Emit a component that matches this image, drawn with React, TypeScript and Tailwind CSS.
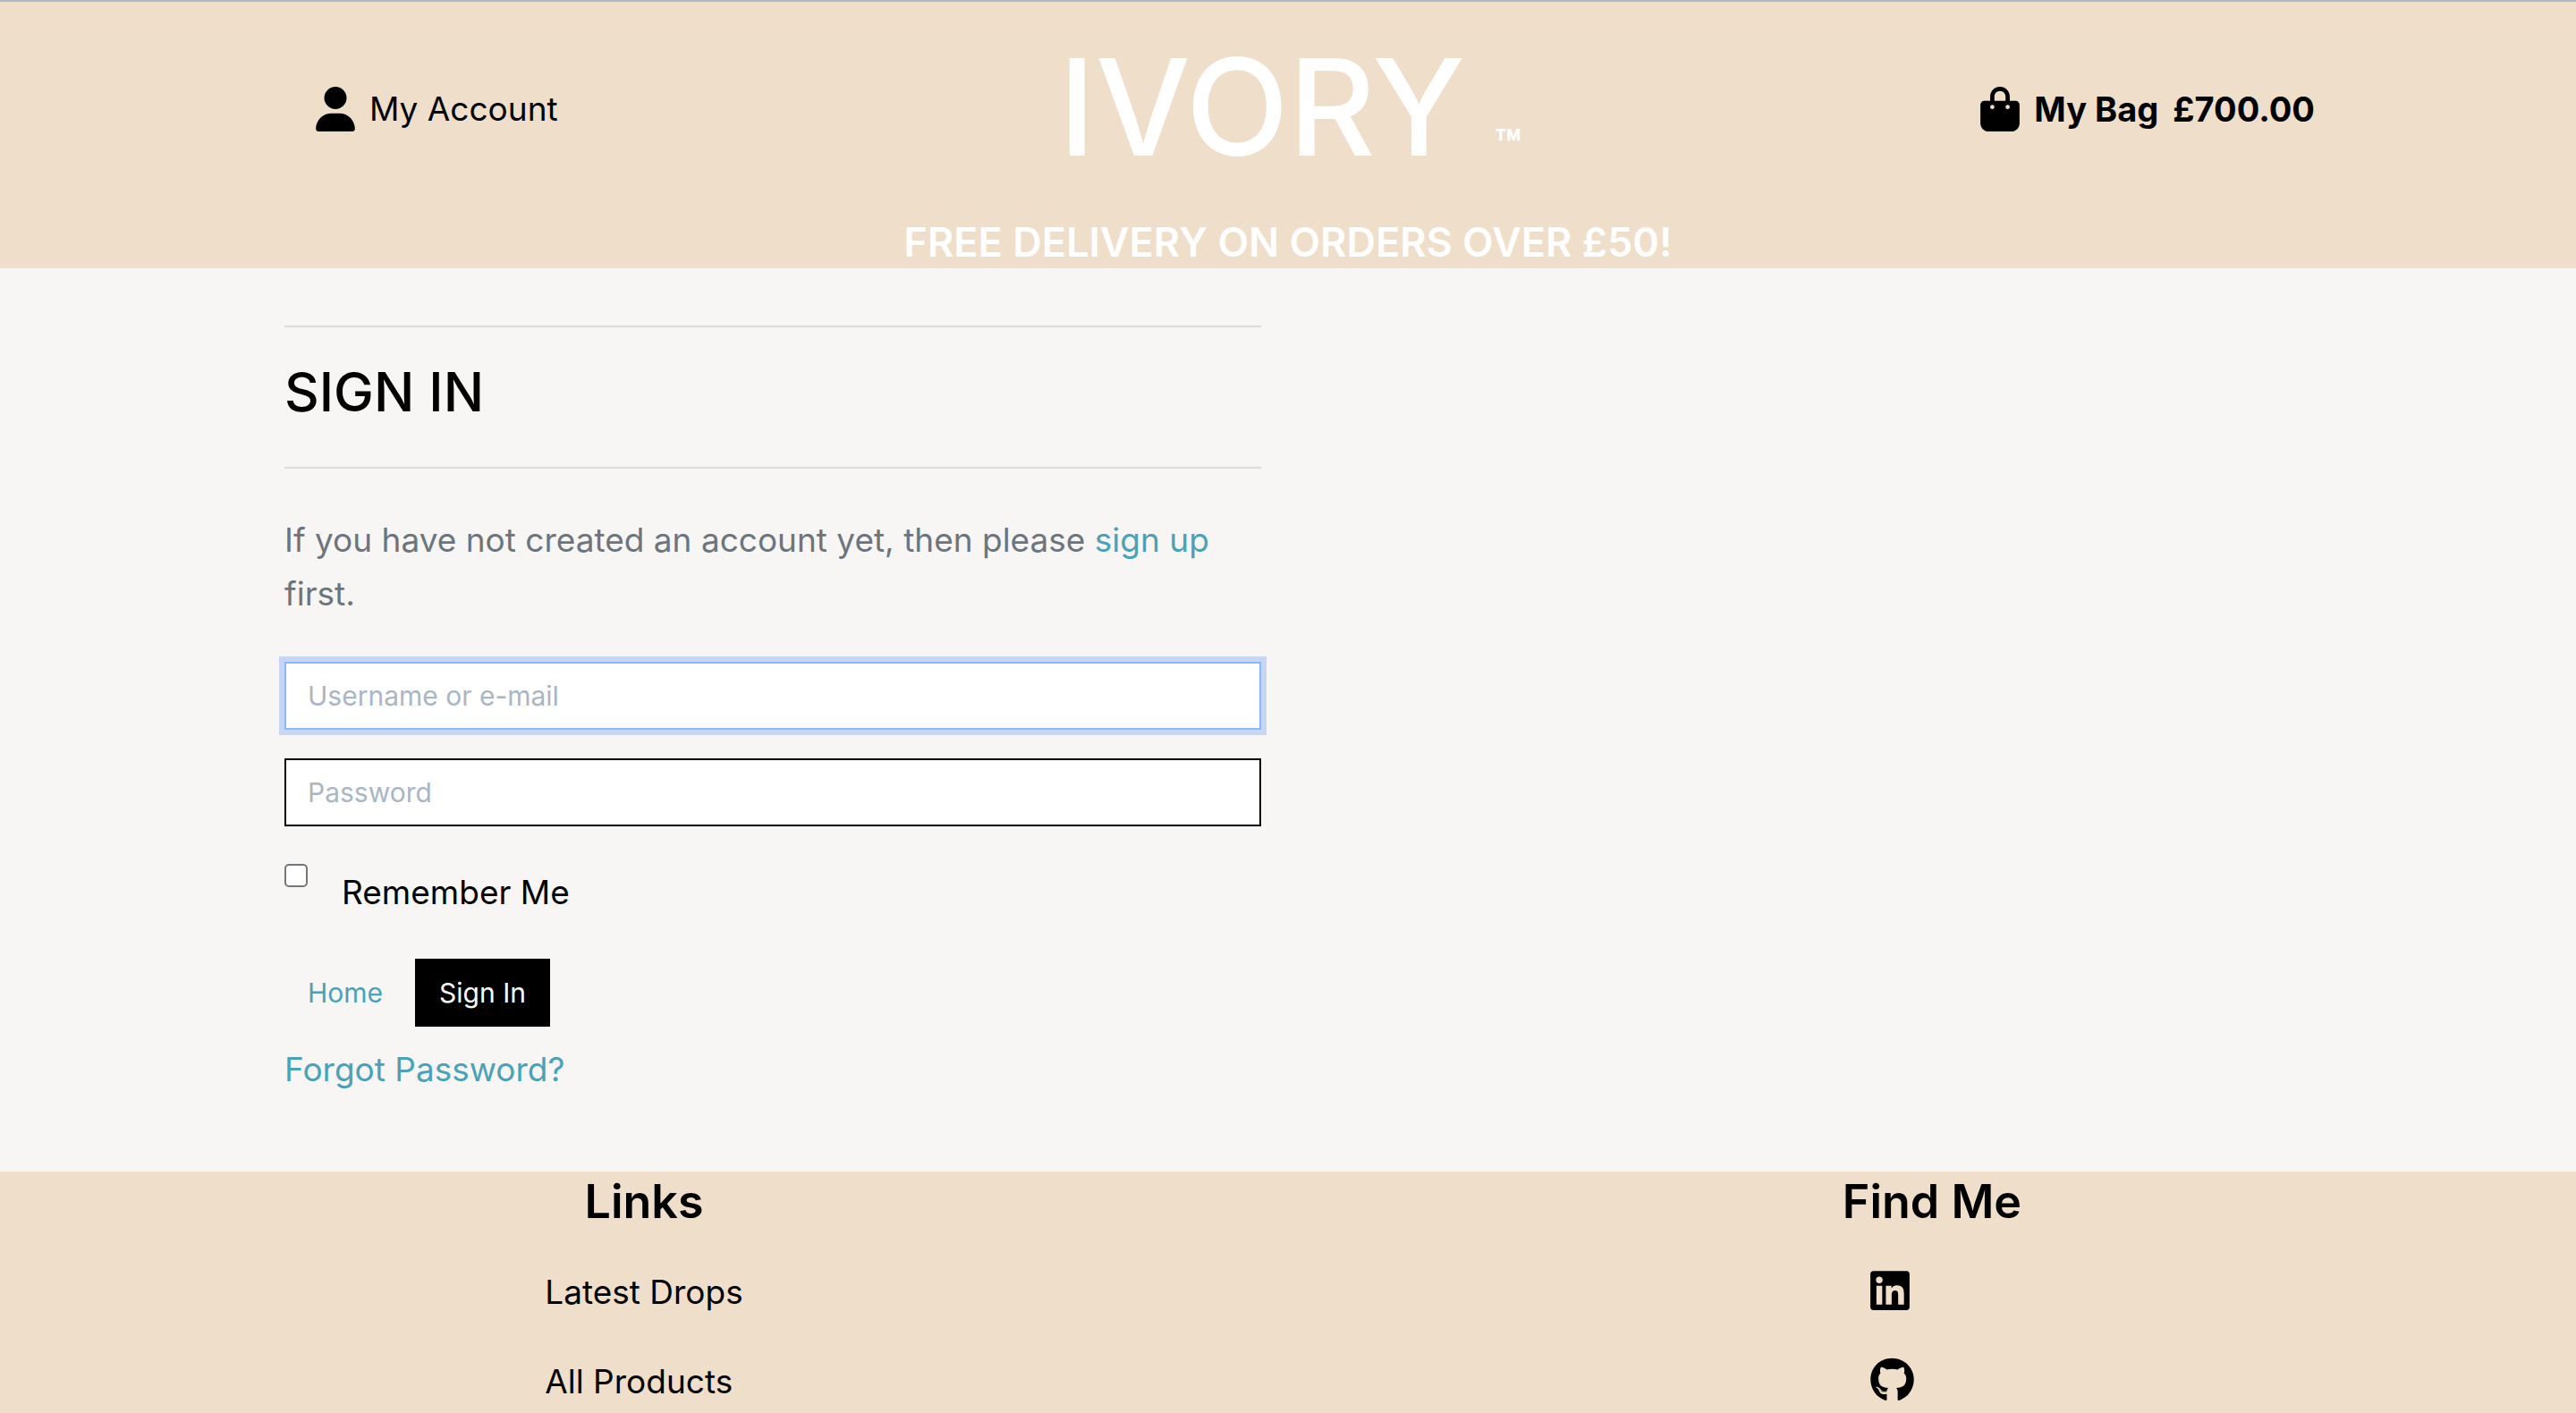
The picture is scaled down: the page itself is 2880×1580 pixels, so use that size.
import { FaBagShopping, FaGithub, FaLinkedin, FaUser } from "react-icons/fa6";

function Header() {
  return (
    <header className="border-t-2 border-[#a9b9c6] bg-[#efdeca]">
      <div className="grid h-60 grid-cols-[1fr_auto_1fr] items-center pl-[353px] pr-[292px]">
        <a href="#account" className="flex items-center gap-4 justify-self-start text-[37px] leading-[62px]">
          <FaUser className="h-[50px] w-[44px]" />
          My Account
        </a>
        <a href="#home" className="flex items-end gap-8 pb-1 pr-14 font-medium text-white">
          <span className="text-[150px] leading-[180px]">IVORY</span>
          <span className="text-[48px] font-bold leading-[96px]">™</span>
        </a>
        <a href="#bag" className="flex items-center gap-4 justify-self-end text-[38px] font-bold leading-[62px]">
          <FaBagShopping className="h-[50px] w-[44px]" />
          <span>My Bag</span>
          <span>£700.00</span>
        </a>
      </div>
      <p className="text-center text-[45px] font-semibold leading-[58px] text-white">
        FREE DELIVERY ON ORDERS OVER £50!
      </p>
    </header>
  );
}

function SignInForm() {
  return (
    <form onSubmit={(e) => e.preventDefault()}>
      <div className="flex flex-col gap-8">
        <input
          type="text"
          aria-label="Username or e-mail"
          placeholder="Username or e-mail"
          className="h-[76px] w-full border-2 border-[#8bb8f8] bg-white px-6 text-[30px] outline-none ring-6 ring-[#c7d5f6] placeholder:text-[#aab6c4]"
        />
        <input
          type="password"
          aria-label="Password"
          placeholder="Password"
          className="h-[76px] w-full border-2 border-black bg-white px-6 text-[30px] outline-none placeholder:text-[#aab6c4]"
        />
      </div>
      <div className="mt-[42px] flex items-start gap-[38px]">
        <input
          id="remember"
          type="checkbox"
          className="size-[26px] appearance-none rounded-[5px] border-2 border-[#767676] bg-white checked:bg-black"
        />
        <label htmlFor="remember" className="text-[37px] leading-[64px]">
          Remember Me
        </label>
      </div>
      <div className="mt-[42px] flex gap-[10px] text-[30px] leading-[76px]">
        <a href="#home" className="px-[26px] text-[#4aa2b8]">
          Home
        </a>
        <button type="submit" className="bg-black px-[27px] text-white">
          Sign In
        </button>
      </div>
      <a href="#reset" className="mt-[18px] inline-block text-[37px] leading-[60px] text-[#4aa2b8]">
        Forgot Password?
      </a>
    </form>
  );
}

function Footer() {
  return (
    <footer className="grid flex-1 grid-cols-2 bg-[#efdeca]">
      <section className="flex flex-col items-center">
        <h2 className="text-[52px] font-semibold leading-[68px]">Links</h2>
        <ul className="mt-[37px] flex flex-col gap-10 text-[37px] leading-[60px]">
          <li>
            <a href="#latest">Latest Drops</a>
          </li>
          <li>
            <a href="#products">All Products</a>
          </li>
        </ul>
      </section>
      <section className="flex flex-col items-center">
        <h2 className="text-[52px] font-semibold leading-[68px]">Find Me</h2>
        <ul className="mt-10 flex w-[138px] flex-col gap-[50px]">
          <li>
            <a href="#linkedin" aria-label="LinkedIn" className="block">
              <FaLinkedin className="h-[50px] w-[44px]" />
            </a>
          </li>
          <li>
            <a href="#github" aria-label="GitHub" className="block">
              <FaGithub className="h-[50px] w-[49px]" />
            </a>
          </li>
        </ul>
      </section>
    </footer>
  );
}

export default function App() {
  return (
    <div className="flex min-h-screen flex-col bg-[#f7f6f4] font-[Inter,sans-serif] text-black">
      <Header />
      <main className="mx-auto grid w-full max-w-[2280px] grid-cols-2 pb-[84px] pt-16">
        <div className="pl-[18px] pr-[30px]">
          <h1 className="border-y-2 border-[#dddcda] pb-12 pt-9 text-[60px] font-medium leading-[72px]">SIGN IN</h1>
          <p className="mb-[46px] mt-[50px] text-[37px] leading-[60px] text-[#6c757d]">
            If you have not created an account yet, then please{" "}
            <a href="#signup" className="text-[#4aa2b8]">
              sign up
            </a>{" "}
            first.
          </p>
          <SignInForm />
        </div>
      </main>
      <Footer />
    </div>
  );
}
